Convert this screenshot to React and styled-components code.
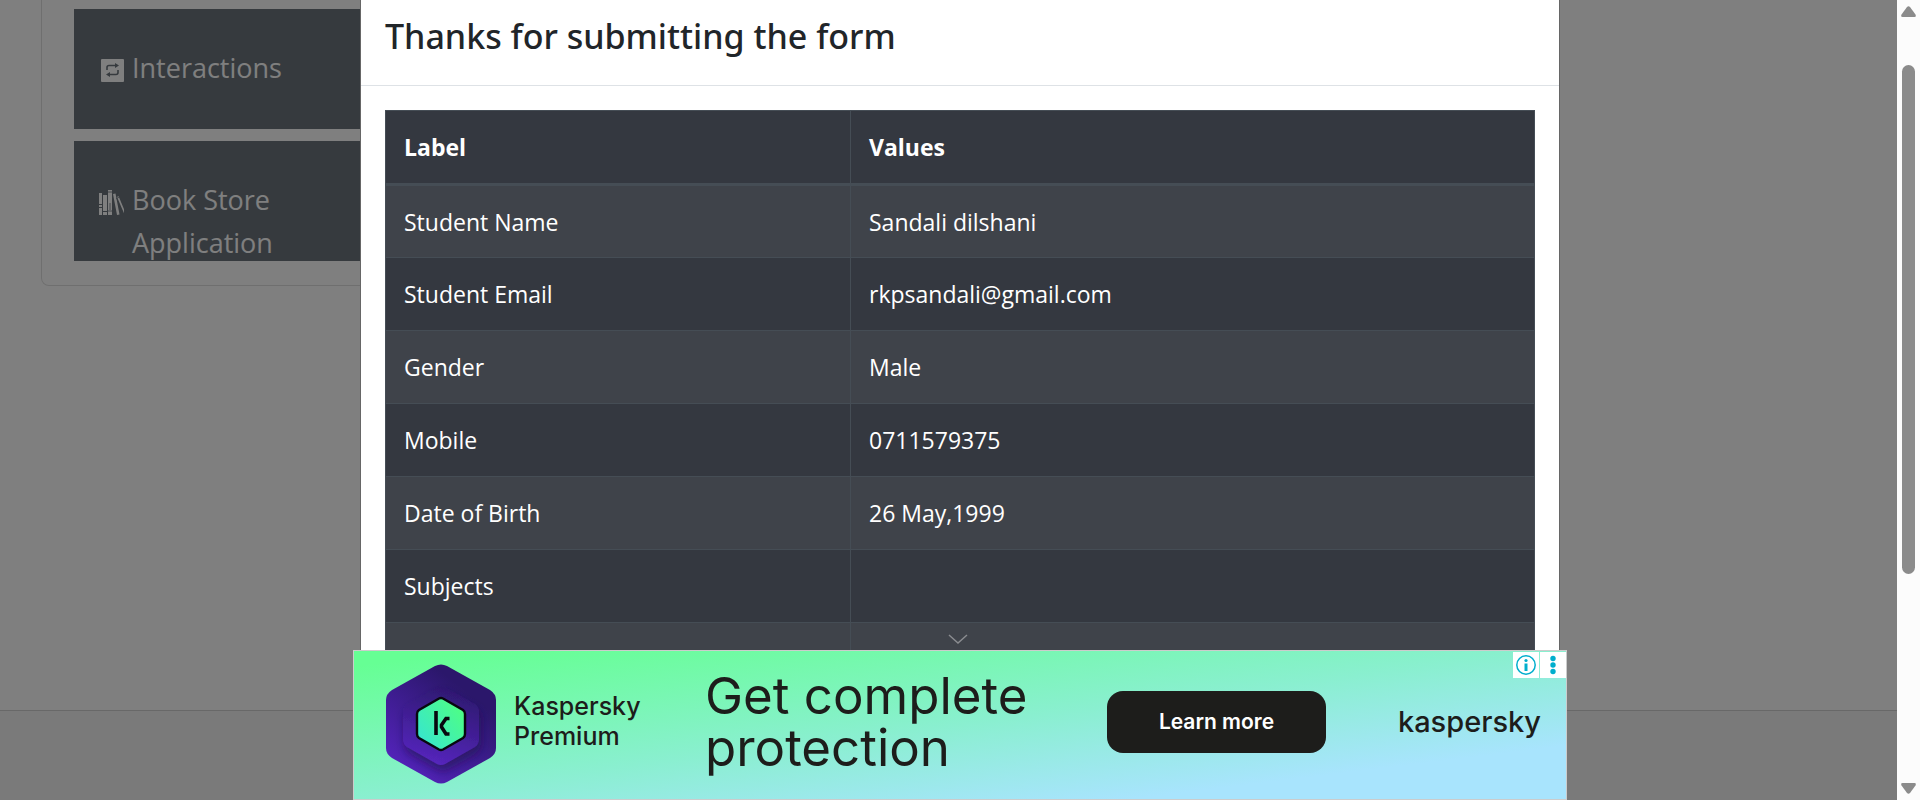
import React from "react";
import styled, { createGlobalStyle } from "styled-components";

const GlobalStyle = createGlobalStyle`
  *, *::before, *::after { box-sizing: border-box; }
  body {
    margin: 0;
    overflow: hidden;
    background: #fff;
    color: #212529;
    font-family: "Open Sans", "Noto Sans", sans-serif;
    font-size: 23px;
    line-height: 36px;
  }
`;

const Page = styled.div`
  display: flex;
  flex-direction: column;
  height: 100vh;
  overflow: hidden;
`;

const Main = styled.main`
  flex: 1;
  min-height: 0;
  padding: 0 40px;
`;

const SidePanel = styled.nav`
  display: flex;
  flex-direction: column;
  gap: 12px;
  width: 25%;
  margin-left: 1px;
  padding: 9px 32px 24px;
  border: 1px solid #dfdfdf;
  border-top: 0;
  border-radius: 0 0 8px 8px;
`;

const MenuCard = styled.a`
  display: flex;
  align-items: flex-start;
  gap: 8px;
  height: 120px;
  padding: 37px 24px 0;
  overflow: hidden;
  background: #6c757d;
  color: #fff;
  font-size: 27px;
  line-height: 43px;
  text-decoration: none;
`;

const MenuIcon = styled.svg`
  flex: none;
  width: 26px;
  height: 26px;
  margin-top: 11px;
`;

const MenuText = styled.span`
  max-width: 200px;
`;

const Footer = styled.footer`
  height: 90px;
  border-top: 1px solid #d0d0d0;
  background: #f5f5f5;
`;

const Backdrop = styled.div`
  position: fixed;
  inset: 0;
  display: flex;
  justify-content: center;
  background: rgba(0, 0, 0, 0.5);
`;

const Modal = styled.section`
  width: 100%;
  max-width: 1200px;
  overflow: hidden;
  border: 1px solid #666;
  border-width: 0 1px;
  background: #fff;
`;

const ModalHeader = styled.header`
  padding: 9px 24px 22px;
  border-bottom: 1px solid #dee2e6;
`;

const ModalTitle = styled.h1`
  margin: 0;
  font-family: "Noto Sans", sans-serif;
  font-size: 34px;
  font-weight: 500;
  line-height: 54px;
`;

const ModalBody = styled.div`
  padding: 24px;
`;

const DataTable = styled.table`
  width: 100%;
  border: 1px solid #454d55;
  border-collapse: collapse;
  table-layout: fixed;
  background: #343a40;
  color: #fff;
`;

const Cell = styled.td`
  height: 73px;
  padding: 0 18px;
  border: 1px solid #454d55;
  text-align: left;
`;

const HeadCell = styled(Cell)`
  width: ${(p) => p.$width};
  height: 74px;
  border-bottom-width: 3px;
  font-weight: 700;
`;

const Row = styled.tr`
  background: ${(p) => (p.$striped ? "#3f434a" : "#343840")};
`;

const ScrollHint = styled.svg`
  position: fixed;
  bottom: 156px;
  left: 50%;
  width: 20px;
  height: 10px;
  margin-left: -12px;
`;

const AdDock = styled.div`
  position: fixed;
  inset: auto 0 0;
  display: flex;
  justify-content: center;
`;

const Ad = styled.aside`
  position: relative;
  display: flex;
  align-items: center;
  width: 100%;
  max-width: 1214px;
  height: 150px;
  padding: 0 25px 6px 32px;
  border: 1px solid #ccc;
  background: linear-gradient(to bottom right, #66ff94 5%, #8aefd0 50%, #a8e4fd 82%);
  color: #1d1d1b;
  font-family: Inter, sans-serif;
`;

const Product = styled.div`
  display: flex;
  align-items: center;
  gap: 18px;
  width: 319px;
  padding-top: 4px;
  font-size: 25px;
  font-weight: 500;
  line-height: 30px;
`;

const ProductName = styled.span`
  width: 140px;
  padding-bottom: 6px;
`;

const HexLogo = styled.svg`
  flex: none;
  width: 110px;
  height: 120px;
`;

const Headline = styled.p`
  width: 402px;
  margin: 0;
  font-size: 51px;
  font-weight: 400;
  line-height: 52px;
`;

const LearnMore = styled.button`
  width: 219px;
  height: 62px;
  border: 0;
  border-radius: 16px;
  background: #1d1d1b;
  color: #fff;
  font: 600 21px/26px Inter, sans-serif;
`;

const Brand = styled.span`
  margin-left: auto;
  font-size: 29px;
  font-weight: 500;
`;

const AdControls = styled.div`
  position: absolute;
  top: 1px;
  right: 0;
  display: flex;
  gap: 1px;
`;

const AdControl = styled.button`
  display: flex;
  width: 26px;
  height: 26px;
  padding: 0;
  border: 0;
  background: #fff;
`;

const ScrollTrack = styled.div`
  position: fixed;
  inset: 0 0 0 auto;
  display: flex;
  flex-direction: column;
  align-items: center;
  width: 23px;
  padding: 6px 0;
  background: #fcfcfc;
`;

const ScrollThumb = styled.div`
  width: 13px;
  height: calc(100% - 279px);
  margin: 48px 0 auto;
  border-radius: 8px;
  background: #8b8b8b;
`;

const Arrow = styled.svg`
  flex: none;
  width: 15px;
  height: 11px;
`;

const rows = [
  ["Student Name", "Sandali dilshani"],
  ["Student Email", "rkpsandali@gmail.com"],
  ["Gender", "Male"],
  ["Mobile", "0711579375"],
  ["Date of Birth", "26 May,1999"],
  ["Subjects", ""],
  ["", ""],
];

function InteractionsIcon() {
  return (
    <MenuIcon viewBox="0 0 26 26" aria-hidden="true">
      <rect x="3" y="2" width="23" height="23" rx="1" fill="#fff" />
      <g fill="none" stroke="#6c757d" strokeWidth="1.6">
        <path d="M9 13v-2.5q0-2 2-2h7M20 13v2.500q0 2-2 2h-7" />
      </g>
      <path d="M17 6l4 2.500-4 2.500zM12 15l-4 2.500 4 2.500z" fill="#6c757d" />
    </MenuIcon>
  );
}

function BooksIcon() {
  return (
    <MenuIcon viewBox="0 0 26 26" aria-hidden="true">
      <g fill="#fff">
        <path d="M1 4h3v11H1zM1 16h3v2H1zM1 19h3v7H1zM5 6h4v16H5zM5 23h4v3H5zM10 1h4v25h-4zM15 5l2.500-.5 4 21-2.500.5zM19 8l1.500-1 7 17-1.200 1z" />
      </g>
      <path d="M10 3h4M10 22h4M12 14v7M18 10l3-2" stroke="#6c757d" strokeWidth="0.800" />
    </MenuIcon>
  );
}

function KasperskyHex() {
  return (
    <HexLogo viewBox="0 0 110 120" aria-hidden="true">
      <defs>
        <linearGradient id="outer" x1="0.2" y1="0.9" x2="0.7" y2="0.2">
          <stop offset="0" stopColor="#5223b8" />
          <stop offset="1" stopColor="#2b176b" />
        </linearGradient>
        <linearGradient id="inner" x1="0.3" y1="1" x2="0.6" y2="0">
          <stop offset="0" stopColor="#5726c0" />
          <stop offset="1" stopColor="#2d186e" />
        </linearGradient>
        <linearGradient id="core" x1="0" y1="1" x2="1" y2="0.2">
          <stop offset="0" stopColor="#34e2d8" />
          <stop offset="1" stopColor="#4fff82" />
        </linearGradient>
        <filter id="shade" x="-30%" y="-30%" width="160%" height="160%">
          <feDropShadow dx="2" dy="6" stdDeviation="5" floodColor="#1b0d4d" floodOpacity="0.6" />
        </filter>
      </defs>
      <path d="M49 2q6-3 12 0l43 24q6 4 6 10v48q0 6-6 10l-43 24q-6 3-12 0L6 94q-6-4-6-10V36q0-6 6-10z" fill="url(#outer)" />
      <path d="M51 23q4-2 8 0l30 17q4 3 4 7v28q0 5-4 8l-30 17q-4 2-8 0L21 83q-4-3-4-8V47q0-4 4-7z" fill="url(#inner)" filter="url(#shade)" />
      <path d="M53 34.500q2-1 4 0l20 11.500q2 1.500 2 4v20q0 2.500-2 4L57 85.500q-2 1-4 0L33 74q-2-1.500-2-4V50q0-2.500 2-4z" fill="url(#core)" stroke="#08080f" strokeWidth="2.400" />
      <path d="M50 47v24M63.500 54.500h-3.500l-4.500 6.500v2l4.500 7h3.500" fill="none" stroke="#08080f" strokeWidth="3.600" />
    </HexLogo>
  );
}

export default function App() {
  return (
    <>
      <GlobalStyle />
      <Page>
        <Main>
          <SidePanel>
            <MenuCard href="#interactions">
              <InteractionsIcon />
              <MenuText>Interactions</MenuText>
            </MenuCard>
            <MenuCard href="#books">
              <BooksIcon />
              <MenuText>Book Store Application</MenuText>
            </MenuCard>
          </SidePanel>
        </Main>
        <Footer />
      </Page>

      <Backdrop>
        <Modal role="dialog" aria-labelledby="modal-title">
          <ModalHeader>
            <ModalTitle id="modal-title">Thanks for submitting the form</ModalTitle>
          </ModalHeader>
          <ModalBody>
            <DataTable>
              <thead>
                <Row>
                  <HeadCell as="th" $width="465px">Label</HeadCell>
                  <HeadCell as="th" $width="auto">Values</HeadCell>
                </Row>
              </thead>
              <tbody>
                {rows.map(([label, value], i) => (
                  <Row key={i} $striped={i % 2 === 0}>
                    <Cell>{label}</Cell>
                    <Cell>{value}</Cell>
                  </Row>
                ))}
              </tbody>
            </DataTable>
          </ModalBody>
        </Modal>
      </Backdrop>

      <ScrollHint viewBox="0 0 20 10" aria-hidden="true">
        <path d="M1 1l9 8 9-8" fill="none" stroke="#8a8c90" strokeWidth="1.500" />
      </ScrollHint>

      <AdDock>
        <Ad>
          <Product>
            <KasperskyHex />
            <ProductName>Kaspersky Premium</ProductName>
          </Product>
          <Headline>Get complete protection</Headline>
          <LearnMore type="button">Learn more</LearnMore>
          <Brand>kaspersky</Brand>
          <AdControls>
            <AdControl type="button" aria-label="Ad information">
              <svg width="26" height="26" viewBox="0 0 26 26">
                <circle cx="13" cy="13" r="9.200" fill="none" stroke="#00aecd" strokeWidth="1.500" />
                <path d="M13 11.500v7.500" stroke="#00aecd" strokeWidth="3" />
                <circle cx="13" cy="8.500" r="1.600" fill="#00aecd" />
              </svg>
            </AdControl>
            <AdControl type="button" aria-label="Ad options">
              <svg width="26" height="26" viewBox="0 0 26 26" fill="#00aecd">
                <circle cx="13" cy="6.500" r="2.700" />
                <circle cx="13" cy="13" r="2.700" />
                <circle cx="13" cy="19.500" r="2.700" />
              </svg>
            </AdControl>
          </AdControls>
        </Ad>
      </AdDock>

      <ScrollTrack aria-hidden="true">
        <Arrow viewBox="0 0 15 11">
          <path d="M6 1q1.500-1.500 3 0l5.500 7.500q1 2.500-1 2.500h-12q-2 0-1-2.500z" fill="#8b8b8b" />
        </Arrow>
        <ScrollThumb />
        <Arrow viewBox="0 0 15 11">
          <path d="M6 10q1.500 1.500 3 0l5.500-7.500q1-2.500-1-2.500h-12q-2 0-1 2.500z" fill="#8b8b8b" />
        </Arrow>
      </ScrollTrack>
    </>
  );
}
